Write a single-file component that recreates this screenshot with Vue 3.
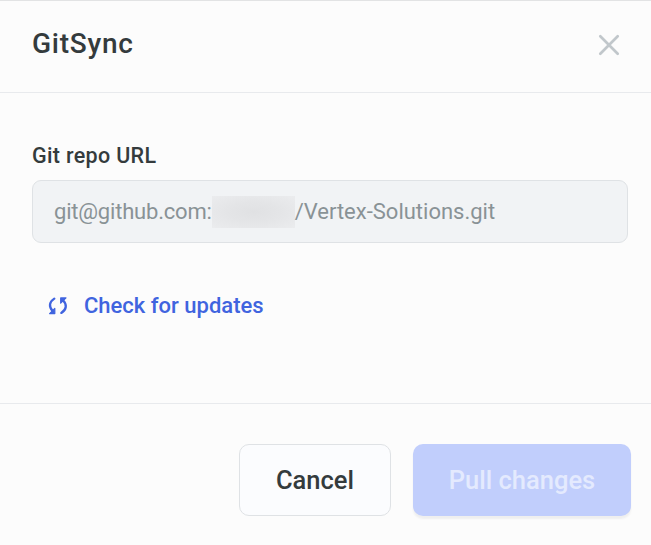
<script setup>
import { ref } from 'vue'

const owner = ref('')
const host = 'git@github.com:'
const repo = '/Vertex-Solutions.git'
</script>

<template>
  <section class="modal" role="dialog" aria-labelledby="modal-title">
    <header class="modal-header">
      <h1 id="modal-title" class="title">GitSync</h1>
      <button class="close" aria-label="Close">
        <svg width="22" height="22" viewBox="0 0 22 22">
          <path d="M2.3 2.3L19.7 19.7M19.7 2.3L2.3 19.7" />
        </svg>
      </button>
    </header>

    <main class="modal-body">
      <div class="label">Git repo URL</div>
      <div class="field">
        <span class="host">{{ host }}</span>
        <span class="redacted">{{ owner }}</span>
        <span class="repo">{{ repo }}</span>
      </div>
      <button class="check">
        <svg class="sync" width="20" height="20" viewBox="0 0 20 20">
          <path class="arc" d="M6.3 2.6C1.2 5.8 .6 10.8 4.6 15" />
          <path class="head" d="M1.6 17.6H6.8V12.4Z" />
          <path class="arc" d="M13.3 16.9C18.6 13.6 19.2 8.7 15.2 4.5" />
          <path class="head" d="M18 1.9H12.7V7.2Z" />
        </svg>
        <span class="check-text">Check for updates</span>
      </button>
    </main>

    <footer class="modal-footer">
      <button class="btn cancel"><span>Cancel</span></button>
      <button class="btn pull" disabled><span>Pull changes</span></button>
    </footer>
  </section>
</template>

<style>
body {
  background: #fcfcfc;
}
</style>

<style scoped>
.modal {
  box-sizing: border-box;
  height: 545px;
  display: flex;
  flex-direction: column;
  border-top: 1px solid #e2e3e4;
  background: #fcfcfc;
  color: #343b3d;
  font-family: Roboto, "Liberation Sans", sans-serif;
}

button {
  margin: 0;
  padding: 0;
  border: 0;
  background: none;
  color: inherit;
  font-family: inherit;
}

svg {
  display: block;
  fill: none;
}

.modal-header {
  box-sizing: border-box;
  height: 92px;
  padding: 0 31px 4px 32px;
  display: flex;
  align-items: center;
  justify-content: space-between;
  border-bottom: 1px solid #e8eaed;
}

.title {
  margin: 0;
  padding-bottom: 2px;
  font-size: 28px;
  line-height: 36px;
  font-weight: 500;
  letter-spacing: 0.75px;
}

.close path {
  stroke: #c1c7cb;
  stroke-width: 2.7;
  stroke-linecap: round;
}

.modal-body {
  box-sizing: border-box;
  height: 310px;
  padding: 49px 23px 0 32px;
  display: flex;
  flex-direction: column;
  align-items: stretch;
}

.label {
  font-size: 21.5px;
  line-height: 28px;
  font-weight: 500;
  letter-spacing: 0.33px;
}

.field {
  box-sizing: border-box;
  height: 63px;
  margin-top: 10px;
  padding: 0 21px;
  display: flex;
  align-items: center;
  border: 1px solid #dfe2e5;
  border-radius: 9px;
  background: #f1f3f5;
  color: #899296;
  font-size: 22px;
  line-height: 30px;
}

.host,
.repo {
  white-space: nowrap;
}

.host {
  letter-spacing: -0.2px;
}

.redacted {
  width: 83px;
  height: 32px;
  background: radial-gradient(ellipse at 50% 50%, #e0e1e3 0%, #e4e5e7 45%, #ebecee 100%);
}

.check {
  align-self: flex-start;
  margin: 48px 0 0 16px;
  display: flex;
  align-items: center;
  gap: 16px;
  color: #4064df;
}

.arc {
  stroke: currentColor;
  stroke-width: 2.3;
  stroke-linecap: round;
}

.head {
  fill: currentColor;
  stroke: currentColor;
  stroke-width: 1.2;
  stroke-linejoin: round;
}

.check-text {
  font-size: 22px;
  line-height: 30px;
  font-weight: 500;
}

.modal-footer {
  flex: 1;
  padding: 40px 20px 0;
  display: flex;
  align-items: flex-start;
  justify-content: flex-end;
  gap: 22px;
  border-top: 1px solid #e8eaed;
}

.btn {
  box-sizing: border-box;
  height: 72px;
  border-radius: 10px;
  font-size: 25.5px;
  line-height: 34px;
  font-weight: 500;
  white-space: nowrap;
}

.cancel {
  width: 152px;
  border: 1px solid #dfe2e5;
  background: #fbfcfe;
}

.pull {
  width: 218px;
  background: #c1cefc;
  color: #e4eafe;
  box-shadow: 0 3px 2px #efefef;
}
</style>
